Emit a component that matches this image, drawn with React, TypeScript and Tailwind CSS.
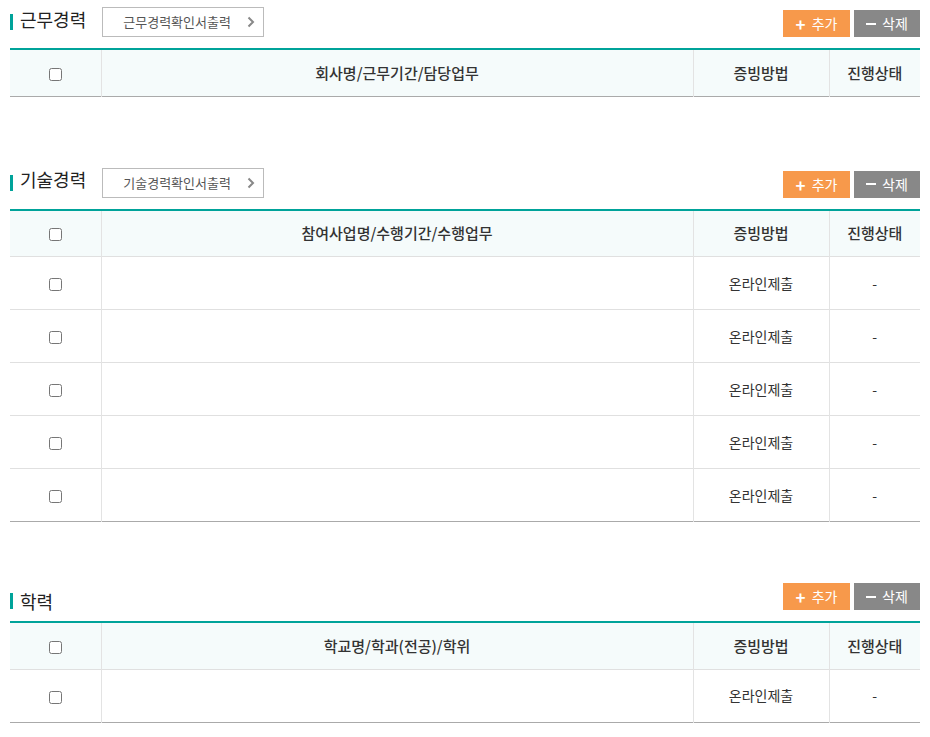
import React from "react";

type Section = {
  title: string;
  printLabel?: string;
  column: string;
  rows: number;
};

const sections: Section[] = [
  { title: "근무경력", printLabel: "근무경력확인서출력", column: "회사명/근무기간/담당업무", rows: 0 },
  { title: "기술경력", printLabel: "기술경력확인서출력", column: "참여사업명/수행기간/수행업무", rows: 5 },
  { title: "학력", column: "학교명/학과(전공)/학위", rows: 1 },
];

function Chevron() {
  return (
    <svg width="8" height="12" viewBox="0 0 8 12" className="ml-auto">
      <path d="M1.5 1.5 L6 6 L1.5 10.5" fill="none" stroke="#888" strokeWidth="2" />
    </svg>
  );
}

function SectionHeader({ title, printLabel }: { title: string; printLabel?: string }) {
  return (
    <div className="flex h-[30px] items-end justify-between">
      <div className="flex h-full items-center">
        <span className={`w-[3px] h-[16px] bg-[#00a39a] ${printLabel ? "" : "mt-[12px]"}`} />
        <h2 className={`ml-[7px] text-[18px] font-normal text-[#222] ${printLabel ? "-mt-[6px]" : "mt-[12px]"}`}>{title}</h2>
        {printLabel && (
          <button
            type="button"
            className="ml-[16px] flex h-[30px] w-[162px] items-center border border-[#bbb] bg-white pl-[20px] pr-[8px] text-[13px] text-[#555]"
          >
            {printLabel}
            <Chevron />
          </button>
        )}
      </div>
      <div className="flex gap-[4px]">
        <button
          type="button"
          className="flex h-[27px] w-[67px] items-center justify-center gap-[6px] bg-[#f7994b] text-[14px] text-white"
        >
          <span className="text-[17px] font-bold leading-none">+</span>추가
        </button>
        <button
          type="button"
          className="flex h-[27px] w-[66px] items-center justify-center gap-[6px] bg-[#888888] text-[14px] text-white"
        >
          <span className="inline-block h-[2px] w-[10px] bg-white" />삭제
        </button>
      </div>
    </div>
  );
}

function DataTable({ column, rows }: { column: string; rows: number }) {
  const list = Array.from({ length: rows });
  return (
    <table className="w-full border-collapse border-t-2 border-b border-t-[#00a39a] border-b-[#aaa] text-[#333]">
      <colgroup>
        <col className="w-[91px]" />
        <col />
        <col className="w-[136px]" />
        <col className="w-[91px]" />
      </colgroup>
      <thead>
        <tr className="h-[47px] bg-[#f5fbfb] text-[15px] font-medium">
          <th className="font-medium">
            <input type="checkbox" className="align-middle" />
          </th>
          <th className="border-l border-[#e3e3e3] font-medium">{column}</th>
          <th className="border-l border-[#e3e3e3] font-medium">증빙방법</th>
          <th className="border-l border-[#e3e3e3] font-medium">진행상태</th>
        </tr>
      </thead>
      <tbody>
        {list.map((_, i) => (
          <tr key={i} className="h-[53px] border-t border-[#e0e0e0] text-[14px]">
            <td className="text-center">
              <input type="checkbox" className="align-middle" />
            </td>
            <td className="border-l border-[#e3e3e3]" />
            <td className="border-l border-[#e3e3e3] text-center">온라인제출</td>
            <td className="border-l border-[#e3e3e3] text-center">-</td>
          </tr>
        ))}
      </tbody>
    </table>
  );
}

export default function App() {
  return (
    <div className="min-h-[737px] bg-white px-[10px] pt-[7px] font-['Noto_Sans_CJK_KR','Noto_Sans',sans-serif]">
      {sections.map((s, i) => (
        <section key={s.title} className={i === 0 ? "" : i === 1 ? "mt-[71px]" : "mt-[58px]"}>
          <SectionHeader title={s.title} printLabel={s.printLabel} />
          <div className="mt-[11px]">
            <DataTable column={s.column} rows={s.rows} />
          </div>
        </section>
      ))}
    </div>
  );
}
